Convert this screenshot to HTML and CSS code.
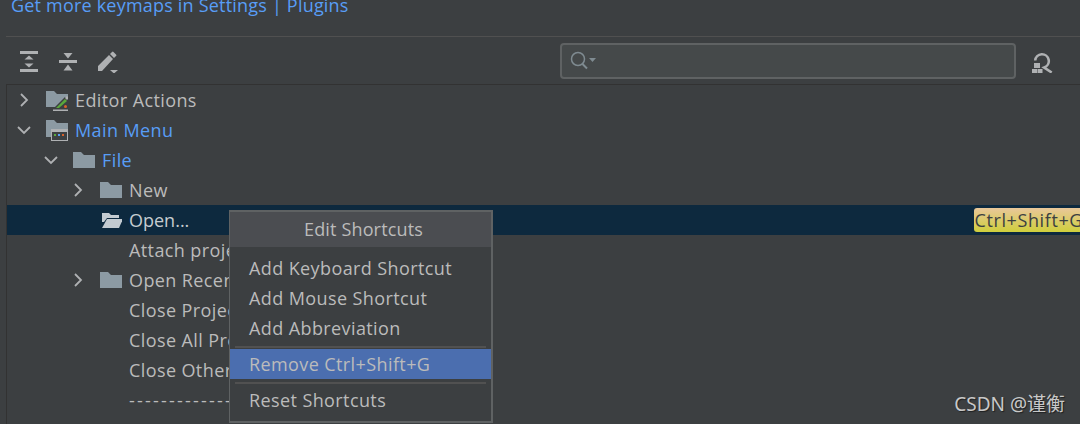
FILE: index.html
```html
<!DOCTYPE html>
<html lang="en">
<head>
    <meta charset="UTF-8">
    <meta name="viewport" content="width=device-width, initial-scale=1.0">
    <title>Keymap</title>
    <link rel="stylesheet" href="styles.css">
</head>
<body>
    <div class="settings">
        <div class="keymap-link">Get more keymaps in Settings | Plugins</div>

        <div class="toolbar">
            <div class="tool-group">
                <svg class="tool" width="20" height="25" viewBox="0 0 20 25"><path d="M1 3h18v3H1zM1 21h18v3H1zM10 7.500l4.500 4h-9zM10 19.500l-4.500-4h9z" fill="#afb1b3"/></svg>
                <svg class="tool" width="20" height="25" viewBox="0 0 20 25"><path d="M2 12h18v3H2zM11 10.500L6.500 5h9zM11 16.500l4.500 6h-9z" fill="#afb1b3"/></svg>
                <svg class="tool" width="24" height="25" viewBox="0 0 24 25"><path d="M3 18L14 7l4 4L7 23H3zM15 6l2-2a1 1 0 0 1 1.500 0l2.500 2.500a1 1 0 0 1 0 1.500l-2 2zM15 22h8l-4 3.500z" fill="#afb1b3"/></svg>
            </div>
            <div class="search-box">
                <svg width="28" height="20" viewBox="0 0 28 20"><circle cx="8" cy="8" r="6.500" fill="none" stroke="#7f8b91" stroke-width="1.500"/><path d="M12.500 13l4.500 4.500" stroke="#7f8b91" stroke-width="2"/><path d="M19 7h7l-3.500 4z" fill="#7f8b91"/></svg>
            </div>
            <svg class="find-shortcut" width="26" height="25" viewBox="0 0 26 25"><path d="M5.200 12.500a6.800 6.800 0 1 1 9 7l7.500 5" fill="none" stroke="#afb1b3" stroke-width="2.600"/><path d="M4 15h6v5H4zM2 21h5v4H2zM7.500 21h5v4h-5z" fill="#afb1b3"/></svg>
        </div>

        <div class="tree">
            <div class="row depth-0">
                <svg class="arrow" width="16" height="16" viewBox="0 0 16 16"><path d="M5 2l6 6-6 6" fill="none" stroke="#afb1b3" stroke-width="1.800"/></svg>
                <svg class="node-icon" width="22" height="22" viewBox="0 0 22 22"><path d="M0 2h8l3 3h11v3L13 18H0z" fill="#8c9aa3"/><path d="M9 18l10-10 3 3-9 8.500H9z" fill="#3c3f41"/><path d="M10 19l9-9 2 2-8 7z" fill="#5aa83c"/><path d="M19 9l2-2 1 1v2l-1 1z" fill="#afb1b3"/><circle cx="19.500" cy="17.500" r="1.500" fill="#d9622b"/><path d="M7 20.500h15V22H7z" fill="#afb1b3"/></svg>
                <span>Editor Actions</span>
            </div>
            <div class="row depth-0 modified">
                <svg class="arrow" width="16" height="16" viewBox="0 0 16 16"><path d="M2 5l6 6 6-6" fill="none" stroke="#afb1b3" stroke-width="1.800"/></svg>
                <svg class="node-icon" width="22" height="22" viewBox="0 0 22 22"><path d="M0 1h8l3 3h11v6H5v8H0z" fill="#8c9aa3"/><rect x="5.500" y="10.500" width="16" height="11" fill="#3c3f41" stroke="#afb1b3"/><path d="M6 11h15v2H6z" fill="#afb1b3"/><path d="M8 15h2v2H8z" fill="#5aa83c"/><path d="M12 15h2v2h-2z" fill="#589df6"/><path d="M16 15h2v2h-2z" fill="#d9622b"/></svg>
                <span>Main Menu</span>
            </div>
            <div class="row depth-1 modified">
                <svg class="arrow" width="16" height="16" viewBox="0 0 16 16"><path d="M2 5l6 6 6-6" fill="none" stroke="#afb1b3" stroke-width="1.800"/></svg>
                <svg class="node-icon" width="22" height="22" viewBox="0 0 22 22"><path d="M0 3h8l3 3h11v13H0z" fill="#8c9aa3"/></svg>
                <span>File</span>
            </div>
            <div class="row depth-2">
                <svg class="arrow" width="16" height="16" viewBox="0 0 16 16"><path d="M5 2l6 6-6 6" fill="none" stroke="#afb1b3" stroke-width="1.800"/></svg>
                <svg class="node-icon" width="22" height="22" viewBox="0 0 22 22"><path d="M0 3h8l3 3h11v13H0z" fill="#8c9aa3"/></svg>
                <span>New</span>
            </div>
            <div class="row depth-2 selected">
                <span class="arrow"></span>
                <svg class="node-icon" width="22" height="22" viewBox="0 0 22 22"><path d="M2 4h7l2 2h8v3H7l-3 4H2z" fill="#c3cbd1"/><path d="M7 10h16l-4 9H2z" fill="#c3cbd1"/></svg>
                <span class="plain">Open...</span>
                <span class="shortcut">Ctrl+Shift+G</span>
            </div>
            <div class="row depth-2"><span class="arrow"></span><span class="node-icon"></span><span>Attach project</span></div>
            <div class="row depth-2">
                <svg class="arrow" width="16" height="16" viewBox="0 0 16 16"><path d="M5 2l6 6-6 6" fill="none" stroke="#afb1b3" stroke-width="1.800"/></svg>
                <svg class="node-icon" width="22" height="22" viewBox="0 0 22 22"><path d="M0 3h8l3 3h11v13H0z" fill="#8c9aa3"/></svg>
                <span>Open Recent</span>
            </div>
            <div class="row depth-2"><span class="arrow"></span><span class="node-icon"></span><span>Close Project</span></div>
            <div class="row depth-2"><span class="arrow"></span><span class="node-icon"></span><span>Close All Projects</span></div>
            <div class="row depth-2"><span class="arrow"></span><span class="node-icon"></span><span>Close Other Projects</span></div>
            <div class="row depth-2"><span class="arrow"></span><span class="node-icon"></span><span class="dashes">-------------</span></div>
            <div class="row depth-2 last"><span class="arrow"></span><span class="node-icon"></span><span>Link Gradle Project</span></div>
        </div>
    </div>

    <div class="menu">
        <div class="menu-title">Edit Shortcuts</div>
        <div class="menu-body">
            <div class="menu-item">Add Keyboard Shortcut</div>
            <div class="menu-item">Add Mouse Shortcut</div>
            <div class="menu-item">Add Abbreviation</div>
            <div class="menu-sep"></div>
            <div class="menu-item active">Remove Ctrl+Shift+G</div>
            <div class="menu-sep"></div>
            <div class="menu-item">Reset Shortcuts</div>
        </div>
    </div>

    <div class="watermark">CSDN @谨衡</div>
</body>
</html>
```

FILE: styles.css
```css
/* General */
html,
body {
    height: 100%;
}

body {
    margin: 0;
    overflow: hidden;
    background: #3c3f41;
    color: #bbbbbb;
    font-family: 'Open Sans', 'Noto Sans', sans-serif;
    font-size: 18px;
    letter-spacing: 0.4px;
}

.settings {
    height: 424px;
    overflow: hidden;
}

.keymap-link {
    height: 36px;
    padding-left: 11px;
    line-height: 10px;
    letter-spacing: 0.2px;
    color: #589df6;
}

/* Toolbar */
.toolbar {
    display: flex;
    align-items: center;
    height: 47px;
    margin-left: 6px;
    border-top: 1px solid #505050;
    border-bottom: 1px solid #323232;
}

.tool-group {
    display: flex;
    align-items: center;
    gap: 18px;
    padding-left: 13px;
}

.search-box {
    display: flex;
    align-items: center;
    box-sizing: border-box;
    width: 456px;
    height: 36px;
    margin-left: auto;
    padding-left: 8px;
    background: #45494a;
    border: 2px solid #5f6263;
    border-radius: 4px;
}

.find-shortcut {
    margin: 0 24px 0 14px;
}

/* Tree */
.tree {
    margin-left: 6px;
    border-left: 1px solid #323232;
}

.row {
    display: flex;
    align-items: center;
    height: 30px;
    white-space: nowrap;
}

.depth-0 { padding-left: 9px; }
.depth-1 { padding-left: 36px; }
.depth-2 { padding-left: 63px; }

.arrow {
    flex: none;
    width: 16px;
    height: 16px;
    margin-right: 14px;
}

.node-icon {
    flex: none;
    width: 22px;
    height: 22px;
    margin-right: 7px;
}

.modified span {
    color: #589df6;
}

.selected {
    background: #0d293e;
    color: #c6ccd0;
}

.plain {
    letter-spacing: 0;
}

.dashes {
    letter-spacing: 2.200px;
}

.last span {
    padding-top: 4px;
}

.shortcut {
    margin-left: auto;
    margin-right: -4px;
    margin-bottom: 1px;
    padding: 0 1px;
    height: 24px;
    line-height: 25px;
    border-radius: 3px;
    letter-spacing: 0.6px;
    background: linear-gradient(#e9c79a, #cfcf3c);
    color: #3c3f41;
}

/* Context menu */
.menu {
    position: absolute;
    left: 229px;
    top: 210px;
    box-sizing: border-box;
    width: 264px;
    height: 213px;
    background: #3c3f41;
    border: 1px solid #5f6263;
    border-width: 2px 2px 2px 1px;
}

.menu-title {
    height: 35px;
    padding-left: 6px;
    line-height: 35px;
    text-align: center;
    letter-spacing: 0.15px;
    background: #4b4d51;
}

.menu-body {
    padding-top: 6px;
}

.menu-item {
    height: 30px;
    padding-left: 19px;
    line-height: 30px;
}

.menu-item.active {
    background: #4b6eaf;
}

.menu-sep {
    height: 2px;
    margin: 3px 5px 1px 5px;
    background: #515151;
}

/* Watermark */
.watermark {
    position: absolute;
    right: 15px;
    bottom: 7px;
    color: #c8c8c8;
    font-family: 'Noto Sans', 'Noto Sans CJK SC', sans-serif;
    font-size: 19px;
    letter-spacing: 0;
    text-shadow: 1px 1px 1px rgba(0, 0, 0, 0.5);
}
```
